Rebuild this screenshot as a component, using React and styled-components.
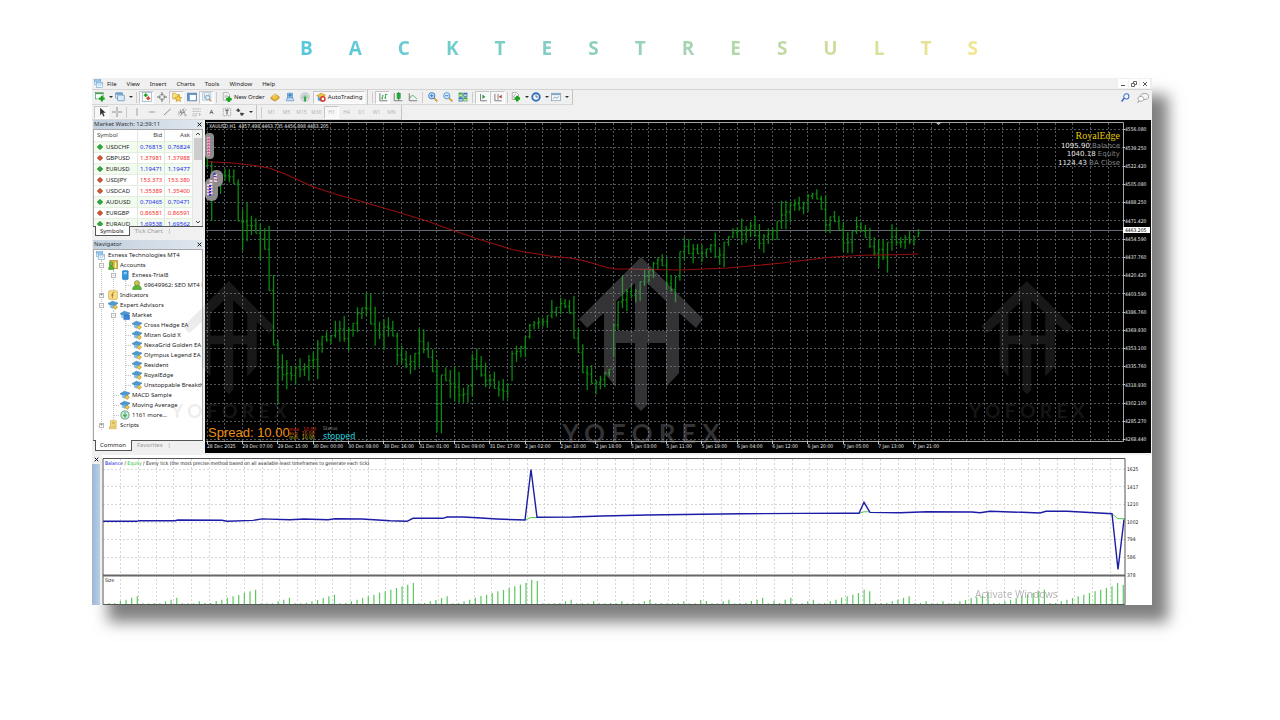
import React from "react";
import styled, { createGlobalStyle, css } from "styled-components";

const GlobalStyle = createGlobalStyle`
  * {
    box-sizing: border-box;
  }
  body {
    margin: 0;
    background: #fff;
    font-family: "Noto Sans", "Open Sans", sans-serif;
    color: #1c1c1c;
  }
  button {
    font: inherit;
    color: inherit;
    padding: 0;
    border: 0;
    background: none;
  }
`;

/* ---------- data ---------- */

const menus = ["File", "View", "Insert", "Charts", "Tools", "Window", "Help"];
const timeframes = ["M1", "M5", "M15", "M30", "H1", "H4", "D1", "W1", "MN"];

const quotes = [
  ["USDCHF", "0.76815", "0.76824", true],
  ["GBPUSD", "1.37981", "1.37988", false],
  ["EURUSD", "1.19471", "1.19477", true],
  ["USDJPY", "153.373", "153.380", false],
  ["USDCAD", "1.35389", "1.35400", false],
  ["AUDUSD", "0.70465", "0.70471", true],
  ["EURGBP", "0.86581", "0.86591", false],
  ["EURAUD", "1.69538", "1.69562", true],
];

const tree = [
  {
    label: "Accounts",
    icon: "accounts",
    sign: "-",
    items: [
      {
        label: "Exness-Trial8",
        icon: "server",
        sign: "-",
        items: [{ label: "69649962: SEO MT4 H", icon: "user" }],
      },
    ],
  },
  { label: "Indicators", icon: "indicator", sign: "+" },
  {
    label: "Expert Advisors",
    icon: "expert",
    sign: "-",
    items: [
      {
        label: "Market",
        icon: "market",
        sign: "-",
        items: [
          "Cross Hedge EA",
          "Mizan Gold X",
          "NexaGrid Golden EA",
          "Olympus Legend EA",
          "Resident",
          "RoyalEdge",
          "Unstoppable Breakthrough",
        ].map((label) => ({ label, icon: "expert" })),
      },
      { label: "MACD Sample", icon: "expert" },
      { label: "Moving Average", icon: "expert" },
      { label: "1161 more...", icon: "globe" },
    ],
  },
  { label: "Scripts", icon: "script", sign: "+" },
];

const prices = [
  "4556.080", "4539.250", "4522.420", "4505.080", "4488.250", "4471.420",
  "4454.590", "4437.760", "4420.420", "4403.590", "4386.760", "4369.930",
  "4353.100", "4335.760", "4318.930", "4302.100", "4285.270", "4268.440",
];

const times = [
  "28 Dec 2025", "29 Dec 07:00", "29 Dec 15:00", "30 Dec 00:00", "30 Dec 08:00",
  "30 Dec 16:00", "31 Dec 01:00", "31 Dec 09:00", "31 Dec 17:00", "2 Jan 02:00",
  "2 Jan 10:00", "2 Jan 18:00", "5 Jan 03:00", "5 Jan 11:00", "5 Jan 19:00",
  "6 Jan 04:00", "6 Jan 12:00", "6 Jan 20:00", "7 Jan 05:00", "7 Jan 13:00",
  "7 Jan 21:00",
];

// [high, low] of every hourly bar, in thirds of a chart unit from the top
const bars = [
  [108, 137], [123, 303], [150, 235], [165, 222], [146, 182], [148, 187], [148, 192], [178, 303],
  [268, 392], [248, 364], [287, 345], [295, 340], [312, 422], [325, 388], [317, 512], [465, 675],
  [660, 850], [703, 782], [720, 808], [738, 782], [737, 795], [715, 772], [730, 768], [705, 782],
  [695, 747], [660, 778], [647, 698], [634, 665], [647, 672], [602, 653], [602, 665], [588, 665],
  [620, 692], [610, 650], [562, 637], [564, 597], [520, 588], [520, 612], [560, 677], [605, 657],
  [598, 690], [592, 650], [602, 648], [637, 735], [677, 733], [692, 745], [705, 762], [700, 750],
  [622, 740], [628, 700], [665, 712], [688, 755], [720, 937], [765, 940], [742, 782], [750, 835],
  [738, 845], [755, 848], [803, 848], [797, 848], [702, 830], [685, 750], [708, 770], [728, 802],
  [762, 802], [755, 805], [782, 830], [777, 842], [793, 835], [692, 783], [677, 725], [677, 712],
  [650, 712], [613, 656], [603, 628], [592, 627], [593, 620], [587, 623], [540, 595], [562, 590],
  [533, 582], [537, 565], [540, 580], [527, 655], [623, 698], [673, 758], [737, 810], [735, 790],
  [780, 823], [767, 808], [755, 802], [748, 770], [615, 712], [545, 630], [467, 565], [507, 573],
  [495, 535], [507, 547], [485, 542], [450, 497], [452, 487], [425, 475], [412, 450], [403, 437],
  [415, 510], [465, 515], [470, 547], [395, 482], [352, 418], [357, 402], [372, 430], [372, 402],
  [375, 427], [387, 412], [372, 398], [338, 413], [385, 435], [367, 442], [350, 378], [325, 355],
  [322, 355], [295, 375], [318, 368], [305, 352], [288, 347], [312, 387], [342, 398], [325, 372],
  [325, 360], [305, 360], [243, 327], [242, 328], [245, 307], [238, 272], [230, 272], [245, 283],
  [222, 275], [218, 238], [208, 237], [227, 268], [225, 338], [290, 340], [273, 305], [287, 328],
  [305, 395], [337, 400], [335, 400], [290, 342], [307, 333], [315, 352], [323, 383], [352, 407],
  [358, 443], [357, 420], [367, 458], [313, 392], [323, 377], [352, 383], [345, 387], [333, 373],
  [350, 377], [327, 350],
];

const average =
  "3,41.7 28,43 50,45.5 65,48.3 80,54 108,66.7 130,74 155,81 195,92.7 222,101 241,108 270,118 288,123.5 307,129.5 320,132 345,136 365,138 380,141 390,144 400,147 410,149 425,149 475,150 522,148 575,143.3 600,140.3 625,137.3 658,135.3 690,134.7 713,134";

const lots = [
  0, 3, 3, 9, 13, 19, 23, 2, 2, 3, 2, 8, 13, 19, 2, 2, 2, 8, 3, 3,
  9, 13, 19, 23, 27, 33, 38, 43, 2, 2, 2, 8, 13, 19, 2, 2, 4, 8, 12, 18,
  23, 28, 2, 3, 8, 13, 19, 23, 28, 34, 38, 43, 48, 53, 58, 63, 2, 3, 8, 12,
  18, 23, 2, 3, 8, 13, 19, 24, 28, 33, 38, 42, 48, 53, 58, 64, 73, 69, 2, 2,
  2, 3, 8, 13, 2, 2, 2, 8, 2, 2, 3, 2, 8, 2, 3, 2, 8, 13, 2, 3,
  2, 2, 3, 8, 2, 2, 12, 9, 2, 2, 8, 13, 2, 2, 3, 9, 13, 19, 2, 9,
  3, 13, 19, 2, 2, 8, 13, 2, 3, 8, 13, 19, 23, 28, 33, 43, 38, 3, 2, 3,
  8, 13, 18, 23, 2, 3, 8, 2, 2, 8, 2, 2, 8, 12, 18, 20, 25, 33, 3, 2,
  8, 13, 18, 23, 28, 33, 38, 43, 3, 3, 8, 13, 18, 23, 28, 33, 38, 43, 48, 53,
  63, 57,
];

const balance =
  "1,66.3 35,66.3 37,65.7 73,65.7 76,65 120,65.3 125,66.2 151,65.4 160,63.9 188,64.7 202,64 226,64.7 233,63.7 260,64 288,65.7 305,66.3 311,63.3 341,63.3 345,62 361,62 375,62.8 395,64 415,64.8 423,65 429,14.5 435,62.3 470,62 500,61 545,60 600,59.2 640,58.8 700,58.4 741,58.3 757,58.3 762,47.3 768,57.4 798,57.7 825,56.7 870,57 878,57.7 888,56.3 920,57.3 938,58 944,56.3 965,56.3 1010,58.7 1016,114.3 1022,64.5";

/* ---------- icons, drawn on a 16 unit grid ---------- */

const art = {
  app: (
    <>
      <rect x="1" y="1" width="11" height="9" fill="#e8f3fc" stroke="#5c9cd6" />
      <path d="M1 3.5h11" stroke="#5c9cd6" strokeWidth="2" />
      <rect x="4" y="6" width="11" height="9" fill="#fff" stroke="#5c9cd6" />
      <path d="M4 8.5h11M6 13l2-2 2 1 3-2" stroke="#5c9cd6" fill="none" />
    </>
  ),
  newChart: (
    <>
      <rect x="1" y="1" width="12" height="10" fill="#fff" stroke="#3c8f4b" />
      <path d="M1 2.5h12" stroke="#4aa35c" strokeWidth="2" />
      <path d="M11 6v9M6.500 10.500h9" stroke="#18a31c" strokeWidth="3.500" />
    </>
  ),
  profiles: (
    <>
      <rect x="1" y="1" width="11" height="9" rx="1" fill="#e4f0fa" stroke="#4783b5" />
      <path d="M1 3h11" stroke="#4783b5" strokeWidth="2" />
      <rect x="4" y="5" width="11" height="9" rx="1" fill="#dbeaf7" stroke="#4783b5" />
    </>
  ),
  watch: (
    <>
      <rect x="1" y="1" width="14" height="14" fill="#fff" stroke="#7da4c4" />
      <path d="M3 5l3-3 3 3-3 3z" fill="#1fa62a" stroke="#1fa62a" />
      <path d="M7 10l3-3 3 3-3 3z" fill="#d6452a" stroke="#d6452a" />
    </>
  ),
  target: (
    <>
      <circle cx="8" cy="8" r="4.500" fill="none" stroke="#777" />
      <path d="M8 0v6M8 10v6M0 8h6M10 8h6" stroke="#666" strokeWidth="1.500" />
    </>
  ),
  folder: (
    <>
      <path d="M1 2h5l1 2h5v7H1z" fill="#fbe083" stroke="#c79a2a" />
      <path d="M10 5l1.600 3.400 3.900.4-2.900 2.600.8 3.800-3.400-2-3.400 2 .8-3.800L4.500 8.800l3.900-.4z" fill="#ffd34d" stroke="#c08a1c" />
    </>
  ),
  terminal: (
    <>
      <rect x="1" y="2" width="14" height="12" fill="#fff" stroke="#4e7fb4" strokeWidth="1.500" />
      <path d="M1 3.500h14" stroke="#4e7fb4" strokeWidth="2" />
      <path d="M3 4v9" stroke="#5b93cf" strokeWidth="3" />
    </>
  ),
  tester: (
    <>
      <path d="M1 1h13v12H1z" fill="#eef4f8" stroke="#9cb4c5" />
      <path d="M4 3v7M7 5v6M11 3v4" stroke="#7b95a5" />
      <circle cx="9" cy="9" r="3.500" fill="#d9ecf8" stroke="#5686a8" />
      <path d="M11.500 11.500L15 15" stroke="#c39a3a" strokeWidth="2" />
    </>
  ),
  order: (
    <>
      <path d="M2 1h7l3 3v9H2z" fill="#fff" stroke="#888" />
      <path d="M4 5h5M4 7h5M4 9h3" stroke="#999" />
      <path d="M11 7v9M6.500 11.500h9" stroke="#18a31c" strokeWidth="4" />
    </>
  ),
  editor: (
    <>
      <path d="M1 9l7-6 7 5-7 6z" fill="#f2c23c" stroke="#b27d15" />
      <path d="M1 9v2l7 4 7-5V8l-7 6z" fill="#c98f21" />
      <path d="M5 7l4-3" stroke="#fff0b0" strokeWidth="1.500" />
    </>
  ),
  community: (
    <>
      <path d="M4 2h8v8H4z" fill="#9dcdf1" stroke="#3e80b8" />
      <circle cx="8" cy="5" r="2.500" fill="#3c87cf" />
      <path d="M2 14c0-4 2-5 6-5s6 1 6 5z" fill="#c6dcf0" stroke="#4f8abf" />
    </>
  ),
  signal: (
    <>
      <circle cx="8" cy="8" r="6.500" fill="none" stroke="#a7b8c2" strokeWidth="1.500" />
      <circle cx="8" cy="8" r="3.800" fill="#b8dcc0" stroke="#86a894" />
      <path d="M8 7v8" stroke="#2fa43f" strokeWidth="3" />
    </>
  ),
  auto: (
    <>
      <path d="M1 6l7-4 7 3-7 4z" fill="#f0c542" stroke="#b48a1e" />
      <path d="M3 8v5l5 2V9z" fill="#4d9ad8" />
      <circle cx="11" cy="11" r="4.500" fill="#d8301f" />
      <rect x="9" y="9" width="4" height="4" fill="#fff" />
    </>
  ),
  barChart: (
    <>
      <path d="M3 2v12h12" stroke="#777" fill="none" strokeWidth="1.500" />
      <path d="M7 5v7M5 10h2M7 6h2M12 3v8M12 4h3M10 9h2" stroke="#3cab4d" strokeWidth="1.500" />
    </>
  ),
  candles: (
    <>
      <path d="M2 2v12h13" stroke="#777" fill="none" strokeWidth="1.500" />
      <path d="M9 0v13" stroke="#16852a" strokeWidth="1.500" />
      <rect x="6.500" y="2" width="5" height="8" fill="#21b03a" stroke="#16852a" />
    </>
  ),
  lineChart: (
    <>
      <path d="M2 2v12h13" stroke="#777" fill="none" strokeWidth="1.500" />
      <path d="M3 10c3-6 5-6 11 1" stroke="#4aab5e" fill="none" strokeWidth="1.500" />
    </>
  ),
  zoomIn: (
    <>
      <path d="M9 9l6 6" stroke="#cfa23b" strokeWidth="3" />
      <circle cx="6" cy="6" r="5" fill="#d9ecfb" stroke="#2f78c4" strokeWidth="1.500" />
      <path d="M6 3v6M3 6h6" stroke="#2f78c4" strokeWidth="1.500" />
    </>
  ),
  zoomOut: (
    <>
      <path d="M9 9l6 6" stroke="#cfa23b" strokeWidth="3" />
      <circle cx="6" cy="6" r="5" fill="#d9ecfb" stroke="#4d91d2" strokeWidth="1.500" />
      <path d="M3 6h6" stroke="#2f78c4" strokeWidth="1.500" />
    </>
  ),
  tile: (
    <>
      <path d="M1 1h6.500v6.500H1z" fill="#3ea23f" />
      <path d="M8.500 1H15v6.500H8.500zM1 8.500h6.500V15H1z" fill="#2f6fc0" />
      <path d="M8.500 8.500H15V15H8.500z" fill="#3ea23f" />
      <path d="M2 4h4.500v2H2zM9.500 4H14v2H9.500zM2 11.500h4.500v2H2zM9.500 11.500H14v2H9.500z" fill="#f6f9d8" />
    </>
  ),
  scroll: (
    <>
      <path d="M4 3v11h10" stroke="#777" fill="none" strokeWidth="1.500" />
      <path d="M7 4l5 3.500L7 11z" fill="#28a53a" />
    </>
  ),
  shift: (
    <>
      <path d="M3 3v11h11M8 3v9" stroke="#777" fill="none" strokeWidth="1.500" />
      <path d="M9 7.500l5-3v6z" fill="#c0442e" />
    </>
  ),
  indicators: (
    <>
      <path d="M2 1h7l3 3v8H2z" fill="#fff" stroke="#888" />
      <path d="M4 9c1-5 3-5 4-5" stroke="#666" fill="none" />
      <path d="M10 6v9M5.500 10.500h9" stroke="#18a31c" strokeWidth="4" />
    </>
  ),
  clock: (
    <>
      <circle cx="8" cy="8" r="6" fill="#f3f9ff" stroke="#2f70bb" strokeWidth="3" />
      <path d="M8 4.500V8h3" stroke="#444" fill="none" strokeWidth="1.200" />
    </>
  ),
  template: (
    <>
      <rect x="1" y="2" width="14" height="12" fill="#f4f8fb" stroke="#6f93ae" />
      <path d="M1 3.500h14" stroke="#7fa7c9" strokeWidth="3" />
      <path d="M3 11l3-3 3 2 4-3" stroke="#4a7f9e" fill="none" />
    </>
  ),
  cursor: <path d="M5 1v12l3-3 2 5 2-1-2-5h4z" fill="#333" />,
  cross: <path d="M8 0v7M8 9v7M0 8h7M9 8h7" stroke="#888" strokeWidth="1.500" />,
  vline: <path d="M8 2v12" stroke="#999" strokeWidth="1.500" />,
  hline: <path d="M3 8h10" stroke="#999" strokeWidth="1.500" />,
  trend: <path d="M3 13L14 3" stroke="#888" strokeWidth="1.500" />,
  channel: (
    <path d="M1 13L12 2M4 15L15 4M2 8l11 1M5 4l3 9M9 3l3 8M12 12h3M12 14h3" stroke="#777" />
  ),
  fibo: (
    <path d="M1 3h13M1 7h13M1 11h9M12 10v4M12 12h3M1 14h7" stroke="#888" strokeDasharray="2 1" />
  ),
  label: (
    <>
      <rect x="2" y="2" width="12" height="12" fill="none" stroke="#888" strokeDasharray="2 1" />
      <path d="M5 5h6M8 5v7" stroke="#444" strokeWidth="1.500" />
    </>
  ),
  arrows: <path d="M1 6l4-4 4 4H7v2H4V6zM8 9h3l4 1-3 4-3-1z" fill="#444" />,
  search: (
    <>
      <path d="M6 9l-5 6" stroke="#3b64c4" strokeWidth="2.500" />
      <circle cx="9.500" cy="6" r="4.500" fill="#fff" stroke="#3b6ad0" strokeWidth="1.800" />
    </>
  ),
  chat: (
    <>
      <ellipse cx="10" cy="6" rx="5.500" ry="4" fill="#f4f4f4" stroke="#888" />
      <path d="M1 14l1.500-3C-.5 8 2 6 5.500 6s5.500 5 1 6c-2 .5-3 0-3 0z" fill="#fff" stroke="#888" />
    </>
  ),
  accounts: (
    <>
      <rect x="3" y="1" width="12" height="13" fill="#e2b93a" stroke="#9a7b1c" />
      <circle cx="5" cy="6" r="3" fill="#6cc24a" stroke="#3d8a25" />
      <path d="M1 15c0-4 2-6 4-6s4 2 4 6z" fill="#57b238" stroke="#3d8a25" />
      <path d="M12 4v9" stroke="#fdf0b6" strokeWidth="2" />
    </>
  ),
  server: (
    <>
      <rect x="4" y="1" width="9" height="14" rx="1" fill="#2f97dd" stroke="#1f6fae" />
      <path d="M6 4h5M6 6h5" stroke="#d7efff" />
    </>
  ),
  user: (
    <>
      <path d="M1 15c0-4 3-7 7-7s7 3 7 7z" fill="#5cb934" stroke="#368518" />
      <circle cx="8" cy="5" r="4" fill="#d5bf4a" stroke="#4d8a25" />
    </>
  ),
  indicator: (
    <>
      <rect x="1" y="1" width="14" height="14" rx="2" fill="#f9dc85" stroke="#cfa545" />
      <path d="M7 13V6q0-2 3-2M5 8h4" stroke="#8a6a20" fill="none" strokeWidth="1.200" />
    </>
  ),
  expert: (
    <>
      <path d="M0 6l7-4 9 3-7 5z" fill="#4c9bd4" stroke="#3b7cae" />
      <path d="M3 8v4l5 2 3-5z" fill="#7ec1ea" />
      <path d="M11 8l4 3-3 4-4-3z" fill="#f3cb4c" stroke="#ad8422" />
    </>
  ),
  market: (
    <>
      <path d="M0 6l7-4 9 3-7 5z" fill="#4c9bd4" stroke="#3b7cae" />
      <path d="M6 8h9v7H6z" fill="#3b86dc" stroke="#2560a8" />
      <path d="M2 8v4l4 2V8z" fill="#7ec1ea" />
    </>
  ),
  globe: (
    <>
      <circle cx="8" cy="8" r="6.500" fill="#cfe9f3" stroke="#5aa06a" strokeWidth="1.500" />
      <path d="M8 3v6M5 8l3 4 3-4z" fill="#4db14a" stroke="#4db14a" strokeWidth="1.500" />
    </>
  ),
  script: (
    <>
      <path d="M4 1h9v9H4zM2 11h11v3H2z" fill="#f8dc80" stroke="#c9a642" />
      <path d="M6 4h5M6 6h5" stroke="#b9963a" />
    </>
  ),
};

const IconSvg = styled.svg`
  width: ${(p) => p.$size}px;
  height: ${(p) => p.$size}px;
  flex: none;
  display: block;
`;

const Icon = ({ name, size = 10 }) => (
  <IconSvg viewBox="0 0 16 16" $size={size} aria-hidden="true">
    {art[name]}
  </IconSvg>
);

/* ---------- page ---------- */

const Page = styled.main`
  padding: 35px 128px 40px 92px;
`;

const Title = styled.h1`
  margin: 0;
  padding: 0 160px 0 208px;
  font-family: "Open Sans", sans-serif;
  font-size: 19px;
  line-height: 26px;
  font-weight: 700;
  letter-spacing: 36px;
  white-space: nowrap;

  span {
    background: linear-gradient(90deg, #56c8dd, #92d0bb 45%, #c8dca0 72%, #fbe88a);
    background-clip: text;
    -webkit-background-clip: text;
    color: transparent;
  }
`;

const Terminal = styled.section`
  position: relative;
  margin-top: 17px;
  background: #f0f0f0;
  box-shadow: 16px 17px 14px rgba(0, 0, 0, 0.5);
  font-size: 6px;
`;

const MenuBar = styled.nav`
  display: flex;
  align-items: center;
  gap: 10px;
  height: 12px;
  padding: 0 2px;
  border-bottom: 1px solid #d4d4d4;
  line-height: 10px;

  svg {
    margin-right: -6px;
  }
`;

const WindowButtons = styled.div`
  display: flex;
  gap: 1px;
  margin-left: auto;
`;

const WindowButton = styled.button`
  width: 10px;
  height: 9px;
  background: #fff;

  svg {
    display: block;
    margin: 0 auto;
  }
`;

const Toolbar = styled.div`
  display: flex;
  align-items: center;
  height: 15px;
`;

const Group = styled.div`
  display: flex;
  align-items: center;
  height: 15px;
  padding: 0 2px;
  border-right: 1px solid #c4c4c4;
  border-bottom: 1px solid #d8d8d8;
`;

const Rule = styled.span`
  width: 1px;
  height: 11px;
  margin: 0 2px;
  background: #ccc;
`;

const Tool = styled.button`
  display: flex;
  align-items: center;
  justify-content: center;
  gap: 1px;
  min-width: 15px;
  height: 13px;
  white-space: nowrap;
  border: 1px solid transparent;
  ${(p) =>
    p.$on &&
    css`
      background: #f8f8f8;
      border-color: #c6c6c6 #fff #fff #c6c6c6;
    `}
  ${(p) => p.$text && "padding: 0 2px; gap: 2px;"}
  ${(p) =>
    p.$menu &&
    css`
      min-width: 20px;
      &::after {
        content: "";
        margin-left: 3px;
        border: 2px solid transparent;
        border-top-color: #333;
        border-bottom: 0;
      }
    `}
`;

const Period = styled(Tool)`
  color: #b4b4b4;
  font-size: 5px;
`;

const Tail = styled.div`
  display: flex;
  gap: 2px;
  margin: 0 2px 0 auto;
`;

const Body = styled.div`
  display: flex;
  align-items: stretch;
  padding-right: 1px;
`;

const Sidebar = styled.aside`
  display: flex;
  flex-direction: column;
  gap: 3px;
  width: 113px;
  flex: none;
  padding: 0 2px 1px 1px;
`;

const Panel = styled.section`
  display: flex;
  flex-direction: column;
  min-height: 0;
  flex: ${(p) => (p.$grow ? 1 : "none")};
`;

const PanelTitle = styled.h2`
  display: flex;
  align-items: center;
  justify-content: space-between;
  height: 9px;
  margin: 0;
  padding: 0 1px;
  background: linear-gradient(90deg, #c3d0df, #dfe6ee);
  font-size: 6px;
  line-height: 9px;
  font-weight: 400;
  color: #333;
`;

const PanelBox = styled.div`
  display: flex;
  min-height: 0;
  ${(p) => (p.$height ? `height: ${p.$height}px;` : "flex: 1;")}
  overflow: hidden;
  background: #fff;
  border: 1px solid #a8a8a8;
  border-bottom: 0;
`;

const Quotes = styled.table`
  flex: 1;
  align-self: flex-start;
  border-collapse: collapse;
  line-height: 10px;

  th,
  td {
    height: 11px;
    padding: 0 2px 0 0;
    text-align: right;
    border-right: 1px solid #dfe8dc;
    border-bottom: 1px solid #e6eee4;
    font-weight: 400;
    white-space: nowrap;
  }
  th {
    color: #444;
  }
  th:first-child {
    padding-left: 3px;
    text-align: left;
  }
  tbody th {
    color: #222;
  }
  tbody th svg {
    margin-right: 3px;
    vertical-align: middle;
  }
`;

const QuoteRow = styled.tr`
  background: ${(p) => (p.$up ? "#f1fbee" : "#fff")};

  td {
    color: ${(p) => (p.$up ? "#1c28f0" : "#f52a1e")};
  }
`;

const Scrollbar = styled.div`
  display: flex;
  flex-direction: column;
  align-items: center;
  width: 9px;
  padding: 2px 0;
  background: #f2f2f2;

  span {
    width: 8px;
    height: 22px;
    margin-top: 2px;
    background: #cdcdcd;
  }
  svg:last-child {
    margin-top: auto;
  }
`;

const Tabs = styled.div`
  display: flex;
  height: ${(p) => p.$height}px;
  border-top: 1px solid #555;
  padding-left: 2px;
`;

const Tab = styled.button`
  height: 100%;
  margin-top: -1px;
  padding: 1px 5px 0 4px;
  line-height: 9px;
  color: #999;
  border: 1px solid transparent;
  border-top: 0;
  ${(p) =>
    p.$on &&
    css`
      color: #222;
      background: #fff;
      border-color: #555;
    `}
  ${(p) => !p.$on && "&::after { content: '|'; margin-left: 5px; }"}
`;

const Tree = styled.ul`
  list-style: none;
  margin: 0;
  padding: 0;
  margin-left: ${(p) => (p.$root ? 7 : 11)}px;
  border-left: 1px dotted #c4c4c4;
`;

const TreeRow = styled.div`
  display: flex;
  align-items: center;
  gap: 2px;
  height: 10px;
  line-height: 10px;
  white-space: nowrap;

  svg {
    margin-left: ${(p) => (p.$sign ? 2 : -1)}px;
  }
`;

const Stub = styled.i`
  width: 5px;
  border-top: 1px dotted #c4c4c4;
`;

const Sign = styled.button`
  display: flex;
  width: 5px;
  height: 5px;
  margin-left: -3px;
  border: 1px solid #bbb;
  background: #fff;
  color: #555;
  font-size: 5px;
  line-height: 2px;
  justify-content: center;
`;

const TreeRoot = styled.div`
  display: flex;
  align-items: center;
  gap: 3px;
  height: 10px;
  padding-left: 2px;
  line-height: 10px;
`;

const ChartPane = styled.div`
  flex: 1;
  min-width: 0;
  background: #000;

  svg {
    display: block;
    width: 100%;
  }
`;

const TesterPane = styled.div`
  display: flex;
  align-items: stretch;
  margin-top: 2px;
`;

const TesterStrip = styled.div`
  display: flex;
  flex-direction: column;
  width: 10px;
  flex: none;
  padding-right: 2px;
  background: #f0f0f0;

  button {
    height: 9px;
    color: #111;
    line-height: 8px;
  }
  button svg {
    display: block;
    margin: 0 auto;
  }
  span {
    flex: 1;
    background: linear-gradient(90deg, #9db8d4, #b9cfe6);
  }
`;

const TesterChart = styled.div`
  flex: 1;
  min-width: 0;
  background: #fff;

  svg {
    display: block;
    width: 100%;
  }
`;

const Mark = styled.svg`
  position: absolute;
  left: ${(p) => p.$left}%;
  top: ${(p) => p.$top}%;
  width: ${(p) => p.$width}%;
  overflow: visible;
  pointer-events: none;
  color: ${(p) => p.$tone};
`;

const GREEN = "#0a8a0f";
const tahoma = '"DejaVu Sans Condensed", "DejaVu Sans", sans-serif';
const small = { fontFamily: tahoma, fontSize: 5 };

/* ---------- parts ---------- */

const Watermark = (props) => (
  <Mark viewBox="0 0 160 190" {...props} aria-hidden="true">
    <g fill="currentColor">
      <path d="M80 0L142 62L135 71L118 56V116L105 130V44L86 26V74H105V86H86V148L80 154L74 148V86H55V74H74V26L55 44V130L43 116V56L26 71L18 62Z" />
      <text
        x="83"
        y="186"
        textAnchor="middle"
        fontFamily="Lato, sans-serif"
        fontWeight="700"
        fontSize="26"
        letterSpacing="6"
      >
        YOFOREX
      </text>
    </g>
  </Mark>
);

const Cross = () => (
  <svg width="5" height="5" viewBox="0 0 5 5" aria-hidden="true">
    <path d="M.7.7l3.600 3.600M4.300.7L.7 4.300" stroke="#111" />
  </svg>
);

const Chevron = ({ down }) => (
  <svg width="6" height="4" viewBox="0 0 6 4" aria-hidden="true">
    <path d={down ? "M1 1l2 2 2-2" : "M1 3l2-2 2 2"} fill="none" stroke="#444" />
  </svg>
);

const Branch = ({ items, root }) => (
  <Tree $root={root}>
    {items.map((item) => (
      <li key={item.label}>
        <TreeRow $sign={!!item.sign}>
          {item.sign ? <Sign aria-label={"Toggle " + item.label}>{item.sign}</Sign> : <Stub />}
          <Icon name={item.icon} />
          {item.label}
        </TreeRow>
        {item.items && <Branch items={item.items} />}
      </li>
    ))}
  </Tree>
);

const barX = (i) => 2.3 + 4.417 * i;

const barPath = () => {
  let last = bars[0][1];
  return bars
    .map(([high, low], i) => {
      const next = bars[i + 1] || bars[i];
      const mid = (next[0] + next[1]) / 2;
      const close = Math.min(low, Math.max(high, mid));
      const x = barX(i);
      const d = `M${x} ${high / 3}V${low / 3}M${x - 1.4} ${last / 3}H${x}M${x} ${close / 3}h1.400`;
      last = close;
      return d;
    })
    .join("");
};

const PriceChart = () => (
  <svg viewBox="0 0 946 333" role="img" aria-label="XAUUSD,H1">
    <rect width="946" height="333" fill="#000" />
    <g stroke="#51595e" strokeDasharray="2 2" strokeWidth="1">
      {prices.map((p, i) => (
        <path key={p} d={`M1 ${Math.floor(9.7 + 18.235 * i) + 0.5}H918`} />
      ))}
      {Array.from({ length: 52 }, (_, i) => (
        <path key={i} d={`M${Math.floor(2.3 + 17.667 * i) + 0.5} 3V321`} />
      ))}
    </g>
    <path d="M1 110.500H918" stroke="#666a72" />
    <path d="M1 2.500H918.500V321.500H1" fill="none" stroke="#a5a5a5" />
    <path d="M730 2h7l-3.500 3z" fill="#bbb" />
    <path d={barPath()} stroke={GREEN} strokeWidth="1.300" fill="none" />
    <polyline points={average} fill="none" stroke="#960e0e" strokeWidth="1.100" />

    <g fill="#8d8d8d">
      <rect x="0" y="13" width="9" height="26" rx="4" />
      <rect x="5" y="50" width="13" height="17" rx="6" />
      <rect x="0" y="58" width="13" height="23" rx="6" />
    </g>
    <g strokeWidth="3" strokeDasharray="2 1">
      <path d="M3.500 17v19" stroke="#f3a6c8" />
      <path d="M10.500 54v8M6 60v15M3.500 64v12" stroke="#f4cfe0" />
      <path d="M3.500 18v18M11 56v5M4 66v9" stroke="#e0559a" strokeWidth="1" />
      <path d="M9.500 53v4M5 65v11" stroke="#2a34e0" strokeWidth="2" />
    </g>

    <g fill="#e8e8e8" {...small}>
      <text x="4" y="7.500" xmlSpace="preserve">
        XAUUSD,H1  4457.498 4463.735 4456.898 4463.205
      </text>
      {prices.map((p, i) => (
        <text key={p} x="920" y={11.4 + 18.235 * i}>
          {p}
        </text>
      ))}
      {times.map((t, i) => (
        <text key={t} x={2 + 35.33 * i} y="328">
          {t}
        </text>
      ))}
    </g>
    <g stroke="#ccc">
      {times.map((t, i) => (
        <path key={t} d={`M${Math.floor(2.3 + 35.33 * i) + 0.5} 321v3`} />
      ))}
      {prices.map((p, i) => (
        <path key={p} d={`M918 ${Math.floor(9.7 + 18.235 * i) + 0.5}h2`} />
      ))}
    </g>
    <rect x="918" y="107" width="27" height="6" fill="#fff" />
    <text x="920" y="112" fill="#000" {...small}>
      4463.205
    </text>

    <text x="915" y="19" textAnchor="end" fill="#e3c70a" fontFamily='"Liberation Serif", serif' fontSize="10">
      RoyalEdge
    </text>
    <g fontFamily='"DejaVu Sans", sans-serif' fontSize="7" textAnchor="end" fill="#828282">
      <text x="915" y="28">
        <tspan fill="#e6e6e6">1095.90</tspan> Balance
      </text>
      <text x="915" y="36">
        <tspan fill="#e6e6e6">1040.18</tspan> Equity
      </text>
      <text x="915" y="45">
        <tspan fill="#e6e6e6">1124.43</tspan> BA Close
      </text>
    </g>

    <text x="3" y="317" fill="#ef8d12" fontFamily='"Liberation Sans", sans-serif' fontSize="13">
      Spread: 10.00
    </text>
    <g {...small}>
      <text x="84" y="311" fill="#e0301e" xmlSpace="preserve">
        max:  10.00
      </text>
      <text x="84" y="315" fill="#dc741e" xmlSpace="preserve">
        avg:  10.00
      </text>
      <text x="84" y="319" fill="#cfc01c" xmlSpace="preserve">
        min:  10.00
      </text>
      <text x="118" y="310" fill="#8a8a8a">
        Status
      </text>
    </g>
    <text x="118" y="319" fill="#1fd4e0" fontFamily='"DejaVu Sans", sans-serif' fontSize="8">
      stopped
    </text>
  </svg>
);

const TesterGraph = () => (
  <svg viewBox="0 0 1050 150" role="img" aria-label="Balance and equity">
    <rect width="1050" height="150" fill="#fff" />
    <g stroke="#d6d6d6" strokeDasharray="2 2">
      {[14, 31, 49, 67, 84, 102].map((y) => (
        <path key={y} d={`M1 ${y + 0.5}H1023`} />
      ))}
      {Array.from({ length: 57 }, (_, i) => (
        <path key={i} d={`M${Math.floor(18.7 + 17.667 * i) + 0.5} 4V149`} />
      ))}
    </g>
    <g stroke="#5cc75f" strokeWidth="1.200">
      {lots.map((lot, i) => (
        <path key={i} d={`M${1.5 + 5.634 * i} 149v${-lot / 3}`} />
      ))}
    </g>
    <path d="M423 65l6-2.500h6M757 58.300l5-1.500h6M1010 58.700l6 5h7" stroke="#4ecb54" fill="none" />
    <polyline points={balance} fill="none" stroke="#1c1ca6" strokeWidth="1.400" />
    <path d="M1023 3.500H1V149.500H1023V3.500" stroke="#555" fill="none" />
    <path d="M1 120.500H1023" stroke="#666" strokeWidth="2" />
    <g {...small} fill="#222">
      {["1625", "1417", "1210", "1002", "794", "586", "378"].map((v, i) => (
        <text key={v} x="1025" y={16 + 17.6 * i}>
          {v}
        </text>
      ))}
      <text x="3" y="10">
        <tspan fill="#2222d8">Balance</tspan> / <tspan fill="#26c02c">Equity</tspan> / Every tick (the most
        precise method based on all available least timeframes to generate each tick)
      </text>
      <text x="3" y="127">
        Size
      </text>
    </g>
    <text x="873" y="143" fill="#9a9a9a" opacity="0.7" fontFamily='"Noto Sans", sans-serif' fontSize="10">
      Activate Windows
    </text>
  </svg>
);

const App = () => {
  return (
    <Page>
      <GlobalStyle />
      <Title>
        <span>BACKTESTRESULTS</span>
      </Title>
      <Terminal>
        <MenuBar>
          <Icon name="app" size={9} />
          {menus.map((m) => (
            <button key={m}>{m}</button>
          ))}
          <WindowButtons>
            <WindowButton aria-label="Minimize">
              <svg width="6" height="6">
                <path d="M1 4.500h4" stroke="#555" />
              </svg>
            </WindowButton>
            <WindowButton aria-label="Restore">
              <svg width="6" height="6">
                <path d="M2.500 2V.500h3v3H4M.500 2.500h3v3h-3z" stroke="#666" fill="none" />
              </svg>
            </WindowButton>
            <WindowButton aria-label="Close">
              <svg width="6" height="6">
                <path d="M1 1l4 4M5 1L1 5" stroke="#555" />
              </svg>
            </WindowButton>
          </WindowButtons>
        </MenuBar>

        <Toolbar>
          <Group>
            <Tool $menu aria-label="New chart"><Icon name="newChart" /></Tool>
            <Tool $menu aria-label="Profiles"><Icon name="profiles" /></Tool>
            <Rule />
            <Tool $on aria-label="Market Watch"><Icon name="watch" /></Tool>
            <Tool aria-label="Data Window"><Icon name="target" /></Tool>
            <Tool $on aria-label="Navigator"><Icon name="folder" /></Tool>
            <Tool aria-label="Terminal"><Icon name="terminal" /></Tool>
            <Tool $on aria-label="Strategy Tester"><Icon name="tester" /></Tool>
            <Rule />
            <Tool $text><Icon name="order" />New Order</Tool>
            <Tool aria-label="MetaEditor"><Icon name="editor" /></Tool>
            <Tool aria-label="Community"><Icon name="community" /></Tool>
            <Tool aria-label="Signals"><Icon name="signal" /></Tool>
            <Tool $on $text><Icon name="auto" />AutoTrading</Tool>
          </Group>
          <Group>
            <Rule />
            <Tool $on aria-label="Bar chart"><Icon name="barChart" /></Tool>
            <Tool aria-label="Candlesticks"><Icon name="candles" /></Tool>
            <Tool aria-label="Line chart"><Icon name="lineChart" /></Tool>
            <Rule />
            <Tool aria-label="Zoom in"><Icon name="zoomIn" /></Tool>
            <Tool aria-label="Zoom out"><Icon name="zoomOut" /></Tool>
            <Tool aria-label="Tile windows"><Icon name="tile" /></Tool>
            <Rule />
            <Tool $on aria-label="Auto scroll"><Icon name="scroll" /></Tool>
            <Tool $on aria-label="Chart shift"><Icon name="shift" /></Tool>
            <Rule />
            <Tool $menu aria-label="Indicators"><Icon name="indicators" /></Tool>
            <Tool $menu aria-label="Periods"><Icon name="clock" /></Tool>
            <Tool $menu aria-label="Templates"><Icon name="template" /></Tool>
          </Group>
          <Tail>
            <Tool aria-label="Search"><Icon name="search" size={9} /></Tool>
            <Tool aria-label="Chat"><Icon name="chat" size={12} /></Tool>
          </Tail>
        </Toolbar>

        <Toolbar>
          <Group>
            <Tool $on aria-label="Cursor"><Icon name="cursor" /></Tool>
            <Tool aria-label="Crosshair"><Icon name="cross" /></Tool>
            <Rule />
            <Tool aria-label="Vertical line"><Icon name="vline" /></Tool>
            <Tool aria-label="Horizontal line"><Icon name="hline" /></Tool>
            <Tool aria-label="Trendline"><Icon name="trend" /></Tool>
            <Tool aria-label="Channel"><Icon name="channel" /></Tool>
            <Tool aria-label="Fibonacci"><Icon name="fibo" /></Tool>
            <Tool>A</Tool>
            <Tool aria-label="Text label"><Icon name="label" /></Tool>
            <Tool $menu aria-label="Arrows"><Icon name="arrows" /></Tool>
          </Group>
          <Group>
            <Rule />
            {timeframes.map((t) => (
              <Period key={t} $on={t === "H1"}>
                {t}
              </Period>
            ))}
          </Group>
        </Toolbar>

        <Body>
          <Sidebar>
            <Panel>
              <PanelTitle>
                Market Watch: 12:39:11 <Cross />
              </PanelTitle>
              <PanelBox $height={97}>
                <Quotes>
                  <thead>
                    <tr>
                      <th>Symbol</th>
                      <th>Bid</th>
                      <th>Ask</th>
                    </tr>
                  </thead>
                  <tbody>
                    {quotes.map(([symbol, bid, ask, up]) => (
                      <QuoteRow key={symbol} $up={up}>
                        <th>
                          <svg width="6" height="6" viewBox="0 0 6 6" aria-hidden="true">
                            <path d="M3 .5L5.500 3 3 5.500.5 3z" fill={up ? "#27b33a" : "#e2552b"} stroke={up ? "#14791f" : "#a1341a"} />
                          </svg>
                          {symbol}
                        </th>
                        <td>{bid}</td>
                        <td>{ask}</td>
                      </QuoteRow>
                    ))}
                  </tbody>
                </Quotes>
                <Scrollbar>
                  <Chevron />
                  <span />
                  <Chevron down />
                </Scrollbar>
              </PanelBox>
              <Tabs $height={11}>
                <Tab $on>Symbols</Tab>
                <Tab>Tick Chart</Tab>
              </Tabs>
            </Panel>

            <Panel $grow>
              <PanelTitle>
                Navigator <Cross />
              </PanelTitle>
              <PanelBox>
                <div>
                  <TreeRoot>
                    <Icon name="app" size={9} />
                    Exness Technologies MT4
                  </TreeRoot>
                  <Branch items={tree} root />
                </div>
              </PanelBox>
              <Tabs $height={12}>
                <Tab $on>Common</Tab>
                <Tab>Favorites</Tab>
              </Tabs>
            </Panel>
          </Sidebar>
          <ChartPane>
            <PriceChart />
          </ChartPane>
        </Body>

        <TesterPane>
          <TesterStrip>
            <button aria-label="Close tester">
              <Cross />
            </button>
            <span />
          </TesterStrip>
          <TesterChart>
            <TesterGraph />
          </TesterChart>
        </TesterPane>

        <Watermark $left={7.4} $top={38.6} $width={11.1} $tone="rgba(140, 140, 145, 0.17)" />
        <Watermark $left={44.2} $top={34} $width={15.1} $tone="rgba(150, 150, 158, 0.34)" />
        <Watermark $left={82.6} $top={38.6} $width={11.1} $tone="rgba(140, 140, 145, 0.17)" />
      </Terminal>
    </Page>
  );
};

export default App;
